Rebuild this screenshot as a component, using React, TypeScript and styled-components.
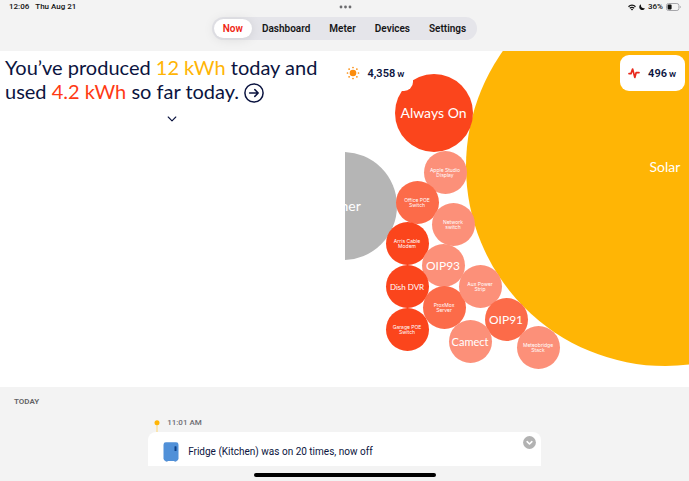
import React from "react";
import styled, { createGlobalStyle } from "styled-components";

const ui = `Roboto, Inter, sans-serif`;
const display = `Lato, "Open Sans", sans-serif`;
const navy = "#0b1440";
const red = "#fb451c";
const coral = "#fc6b49";
const salmon = "#fc9079";
const yellow = "#ffb505";

const GlobalStyle = createGlobalStyle`
  *, *::before, *::after { box-sizing: border-box; }
  body { margin: 0; background: #f3f3f3; font-family: ${ui}; }
  button { border: 0; padding: 0; background: none; font: inherit; color: inherit; cursor: pointer; }
  svg { display: block; }
  h1, h2, p { margin: 0; }
`;

const Page = styled.div`
  display: flex;
  flex-direction: column;
  min-height: 100vh;
`;

const StatusBar = styled.div`
  display: grid;
  grid-template-columns: 1fr auto 1fr;
  align-items: center;
  height: 14px;
  padding: 0 8px 0 9px;
  font-size: 8px;
  line-height: 14px;
  font-weight: 500;
  color: #111;
`;

const StatusGroup = styled.div<{ $end?: boolean; $gap: number }>`
  display: flex;
  align-items: center;
  justify-content: ${(p) => (p.$end ? "flex-end" : "flex-start")};
  gap: ${(p) => p.$gap}px;
`;

const Nav = styled.nav`
  display: flex;
  align-self: center;
  gap: 1px;
  margin: 3px 0 11px;
  padding: 2px;
  border-radius: 12px;
  background: #e5e5ea;
`;

const Tab = styled.button<{ $active?: boolean }>`
  && {
    height: 19px;
    padding: 0 9px;
    border-radius: 10px;
    font-size: 10px;
    line-height: 19px;
    font-weight: 600;
    color: ${(p) => (p.$active ? "#ef2613" : "#161617")};
    background: ${(p) => (p.$active ? "#fff" : "transparent")};
    box-shadow: ${(p) => (p.$active ? "0 1px 12px rgba(0, 0, 0, 0.1)" : "none")};
  }
`;

const Hero = styled.main`
  display: grid;
  grid-template-columns: 1fr 1fr;
  background: #fff;
`;

const Summary = styled.section`
  display: flex;
  flex-direction: column;
  align-items: center;
  padding: 4px 0 0 5px;
`;

const Headline = styled.h1`
  align-self: stretch;
  font-family: ${display};
  font-size: 20px;
  line-height: 24px;
  font-weight: 400;
  color: ${navy};
`;

const Amount = styled.span<{ $tone: string }>`
  color: ${(p) => p.$tone};
`;

const InlineButton = styled.button`
  vertical-align: -4px;
`;

const Expand = styled.button`
  margin: 13px 5px 0 0;
`;

const Canvas = styled.section`
  position: relative;
  height: 336px;
  overflow: hidden;
`;

const Bubble = styled.button<{ $x: number; $y: number; $d: number; $fill: string; $size: number }>`
  && {
    position: absolute;
    left: ${(p) => p.$x}px;
    top: ${(p) => p.$y}px;
    display: flex;
    align-items: center;
    justify-content: center;
    width: ${(p) => p.$d}px;
    height: ${(p) => p.$d}px;
    border-radius: 50%;
    background: ${(p) => p.$fill};
    color: #fff;
    font-family: ${(p) => (p.$size < 8 ? "Inter, sans-serif" : display)};
    font-size: ${(p) => p.$size}px;
    line-height: ${(p) => (p.$size < 8 ? "5px" : "16px")};
    white-space: pre;
    text-align: center;
  }
`;

const Readouts = styled.div`
  position: absolute;
  inset: 4px 4px auto 0;
  display: flex;
  justify-content: space-between;
`;

const Readout = styled.div<{ $wide?: boolean }>`
  display: flex;
  align-items: center;
  gap: 8px;
  height: 36px;
  padding: 0 ${(p) => (p.$wide ? "9px 0 1px" : "9px 0 8px")};
  border-radius: 9px;
  background: #fff;
  color: ${navy};
  font-size: 11px;
  font-weight: 600;
`;

const Unit = styled.span`
  margin-left: 2px;
  font-size: 8px;
`;

const Feed = styled.section`
  display: flex;
  flex-direction: column;
  padding-top: 9px;
`;

const Day = styled.h2`
  padding-left: 14px;
  font-size: 8px;
  line-height: 12px;
  font-weight: 600;
  color: #636366;
`;

const Events = styled.div`
  width: 57%;
  margin: 9px auto 0;
`;

const Stamp = styled.div`
  display: flex;
  align-items: flex-start;
  gap: 7px;
  height: 15px;
  padding-left: 6px;
  font-size: 8px;
  line-height: 12px;
  font-weight: 500;
  color: #6e6e73;
`;

const EventCard = styled.article`
  display: flex;
  align-items: flex-start;
  gap: 9px;
  padding: 10px 5px 4px 15px;
  border-radius: 8px 8px 0 0;
  background: #fff;
`;

const EventText = styled.p`
  flex: 1;
  font-size: 10px;
  line-height: 20px;
  color: ${navy};
`;

const Collapse = styled.button`
  margin-top: -6px;
`;

const HomeBar = styled.div`
  align-self: center;
  width: 182px;
  height: 4px;
  margin: auto 0 4px;
  border-radius: 2px;
  background: #000;
`;

const tabs = ["Now", "Dashboard", "Meter", "Devices", "Settings"];

const bubbles = [
  { name: "Solar", x: 121, y: -84, d: 399, fill: yellow, size: 14 },
  { name: "Other", x: -56, y: 101, d: 108, fill: "#b5b5b5", size: 14 },
  { name: "Always On", x: 50, y: 23, d: 78, fill: red, size: 14 },
  { name: "Apple Studio\nDisplay", x: 79, y: 100, d: 43, fill: salmon, size: 5 },
  { name: "Office POE\nSwitch", x: 51, y: 130, d: 43, fill: coral, size: 5 },
  { name: "Network\nswitch", x: 87, y: 152, d: 43, fill: salmon, size: 5 },
  { name: "Arris Cable\nModem", x: 41, y: 171, d: 43, fill: red, size: 5 },
  { name: "OIP93", x: 77, y: 193, d: 43, fill: salmon, size: 12 },
  { name: "Dish DVR", x: 41, y: 214, d: 43, fill: red, size: 8 },
  { name: "ProxMox\nServer", x: 78, y: 235, d: 43, fill: coral, size: 5 },
  { name: "Garage POE\nSwitch", x: 41, y: 257, d: 43, fill: red, size: 5 },
  { name: "Aux Power\nStrip", x: 114, y: 214, d: 43, fill: salmon, size: 5 },
  { name: "OIP91", x: 140, y: 247, d: 43, fill: coral, size: 12 },
  { name: "Camect", x: 104, y: 269, d: 43, fill: salmon, size: 11 },
  { name: "Meteobridge\nStack", x: 172, y: 275, d: 43, fill: salmon, size: 5 },
];

const Dots = () => (
  <svg width="13" height="4" viewBox="0 0 13 4" fill="#6b6b6e">
    <circle cx="2" cy="2" r="1.4" />
    <circle cx="6.5" cy="2" r="1.4" />
    <circle cx="11" cy="2" r="1.4" />
  </svg>
);

const Wifi = () => (
  <svg width="8" height="7" viewBox="0 0 16 13" fill="none" stroke="#111" strokeWidth="2.4">
    <path d="M1 5C5 .8 11 .8 15 5M3.6 8C6.2 5.4 9.8 5.4 12.4 8" />
    <path d="M8 12.4 5.6 10Q8 8 10.4 10Z" fill="#111" stroke="none" />
  </svg>
);

const Moon = () => (
  <svg width="6" height="6" viewBox="0 0 12 12" fill="#111">
    <path d="M4 .5C2 1.5.5 3.6.5 6A5.8 5.8 0 0 0 11.7 8.4C7 9.5 2.6 6 4 .5Z" />
  </svg>
);

const Battery = () => (
  <svg width="15" height="8" viewBox="0 0 15 8">
    <rect x=".5" y=".5" width="12.4" height="7" rx="2" fill="none" stroke="#a6a6aa" />
    <rect x="1.6" y="1.6" width="4" height="4.8" rx=".8" fill="#111" />
    <path d="M13.8 2.8q1 .3 1 1.2t-1 1.2Z" fill="#a6a6aa" />
  </svg>
);

const CircleArrow = () => (
  <svg width="20" height="20" viewBox="0 0 20 20" fill="none" stroke={navy} strokeWidth="1.5" strokeLinecap="round" strokeLinejoin="round">
    <circle cx="10" cy="10" r="9.1" />
    <path d="M5.6 10h8.6M10.8 6.6l3.4 3.4-3.4 3.4" />
  </svg>
);

const ChevronDown = () => (
  <svg width="10" height="6" viewBox="0 0 10 6" fill="none" stroke={navy} strokeWidth="1.1" strokeLinecap="round" strokeLinejoin="round">
    <path d="M1.2 1 5 4.8 8.8 1" />
  </svg>
);

const Sun = () => (
  <svg width="14" height="14" viewBox="0 0 14 14" fill="#fb8c0c">
    <circle cx="7" cy="7" r="3.3" />
    {[0, 45, 90, 135, 180, 225, 270, 315].map((a) => (
      <circle key={a} cx="7" cy="1.5" r=".85" transform={`rotate(${a} 7 7)`} />
    ))}
  </svg>
);

const Pulse = () => (
  <svg width="12" height="12" viewBox="0 0 12 12" fill="none" stroke="#e8291c" strokeWidth="1.7" strokeLinecap="round" strokeLinejoin="round">
    <path d="M1 6.6h2L4.6 2l2.2 8.4L8.2 5.6H11" />
  </svg>
);

const Fridge = () => (
  <svg width="16" height="20" viewBox="0 0 16 20">
    <path d="M2.2 18h2.4v1.6H2.8ZM11.4 18h2.4l-.6 1.6h-1.8Z" fill="#3273bd" />
    <rect x=".5" y=".3" width="15" height="18.7" rx="2.4" fill="#5090d8" />
    <rect x="11.5" y="4.2" width="2" height="4.8" rx=".6" fill="#0c3f86" />
  </svg>
);

const CollapseMark = () => (
  <svg width="13" height="13" viewBox="0 0 13 13">
    <circle cx="6.5" cy="6.5" r="6.4" fill="#b2b2b2" />
    <path d="M4.1 5.7 6.5 8l2.4-2.3" fill="none" stroke="#fff" strokeWidth="1.6" strokeLinecap="round" strokeLinejoin="round" />
  </svg>
);

const Marker = () => (
  <svg width="6" height="15" viewBox="0 0 6 15">
    <path d="M3 6v9" stroke="#ffd773" />
    <circle cx="3" cy="5.7" r="2.5" fill={yellow} />
  </svg>
);

export default function App() {
  return (
    <>
      <GlobalStyle />
      <Page>
        <StatusBar>
          <StatusGroup $gap={6}>
            <span>12:06</span>
            <span>Thu Aug 21</span>
          </StatusGroup>
          <Dots />
          <StatusGroup $end $gap={3}>
            <Wifi />
            <Moon />
            <span>36%</span>
            <Battery />
          </StatusGroup>
        </StatusBar>
        <Nav>
          {tabs.map((t, i) => (
            <Tab key={t} $active={i === 0}>{t}</Tab>
          ))}
        </Nav>
        <Hero>
          <Summary>
            <Headline>
              You’ve produced <Amount $tone={yellow}>12 kWh</Amount> today and
              <br />
              used <Amount $tone="#ff3a14">4.2 kWh</Amount> so far today.{" "}
              <InlineButton aria-label="Show details"><CircleArrow /></InlineButton>
            </Headline>
            <Expand aria-label="Expand"><ChevronDown /></Expand>
          </Summary>
          <Canvas>
            {bubbles.map((b) => (
              <Bubble key={b.name} $x={b.x} $y={b.y} $d={b.d} $fill={b.fill} $size={b.size}>{b.name}</Bubble>
            ))}
            <Readouts>
              <Readout $wide>
                <Sun />
                <span>4,358<Unit>W</Unit></span>
              </Readout>
              <Readout>
                <Pulse />
                <span>496<Unit>W</Unit></span>
              </Readout>
            </Readouts>
          </Canvas>
        </Hero>
        <Feed>
          <Day>TODAY</Day>
          <Events>
            <Stamp>
              <Marker />
              <time>11:01 AM</time>
            </Stamp>
            <EventCard>
              <Fridge />
              <EventText>Fridge (Kitchen) was on 20 times, now off</EventText>
              <Collapse aria-label="Collapse event"><CollapseMark /></Collapse>
            </EventCard>
          </Events>
        </Feed>
        <HomeBar />
      </Page>
    </>
  );
}
